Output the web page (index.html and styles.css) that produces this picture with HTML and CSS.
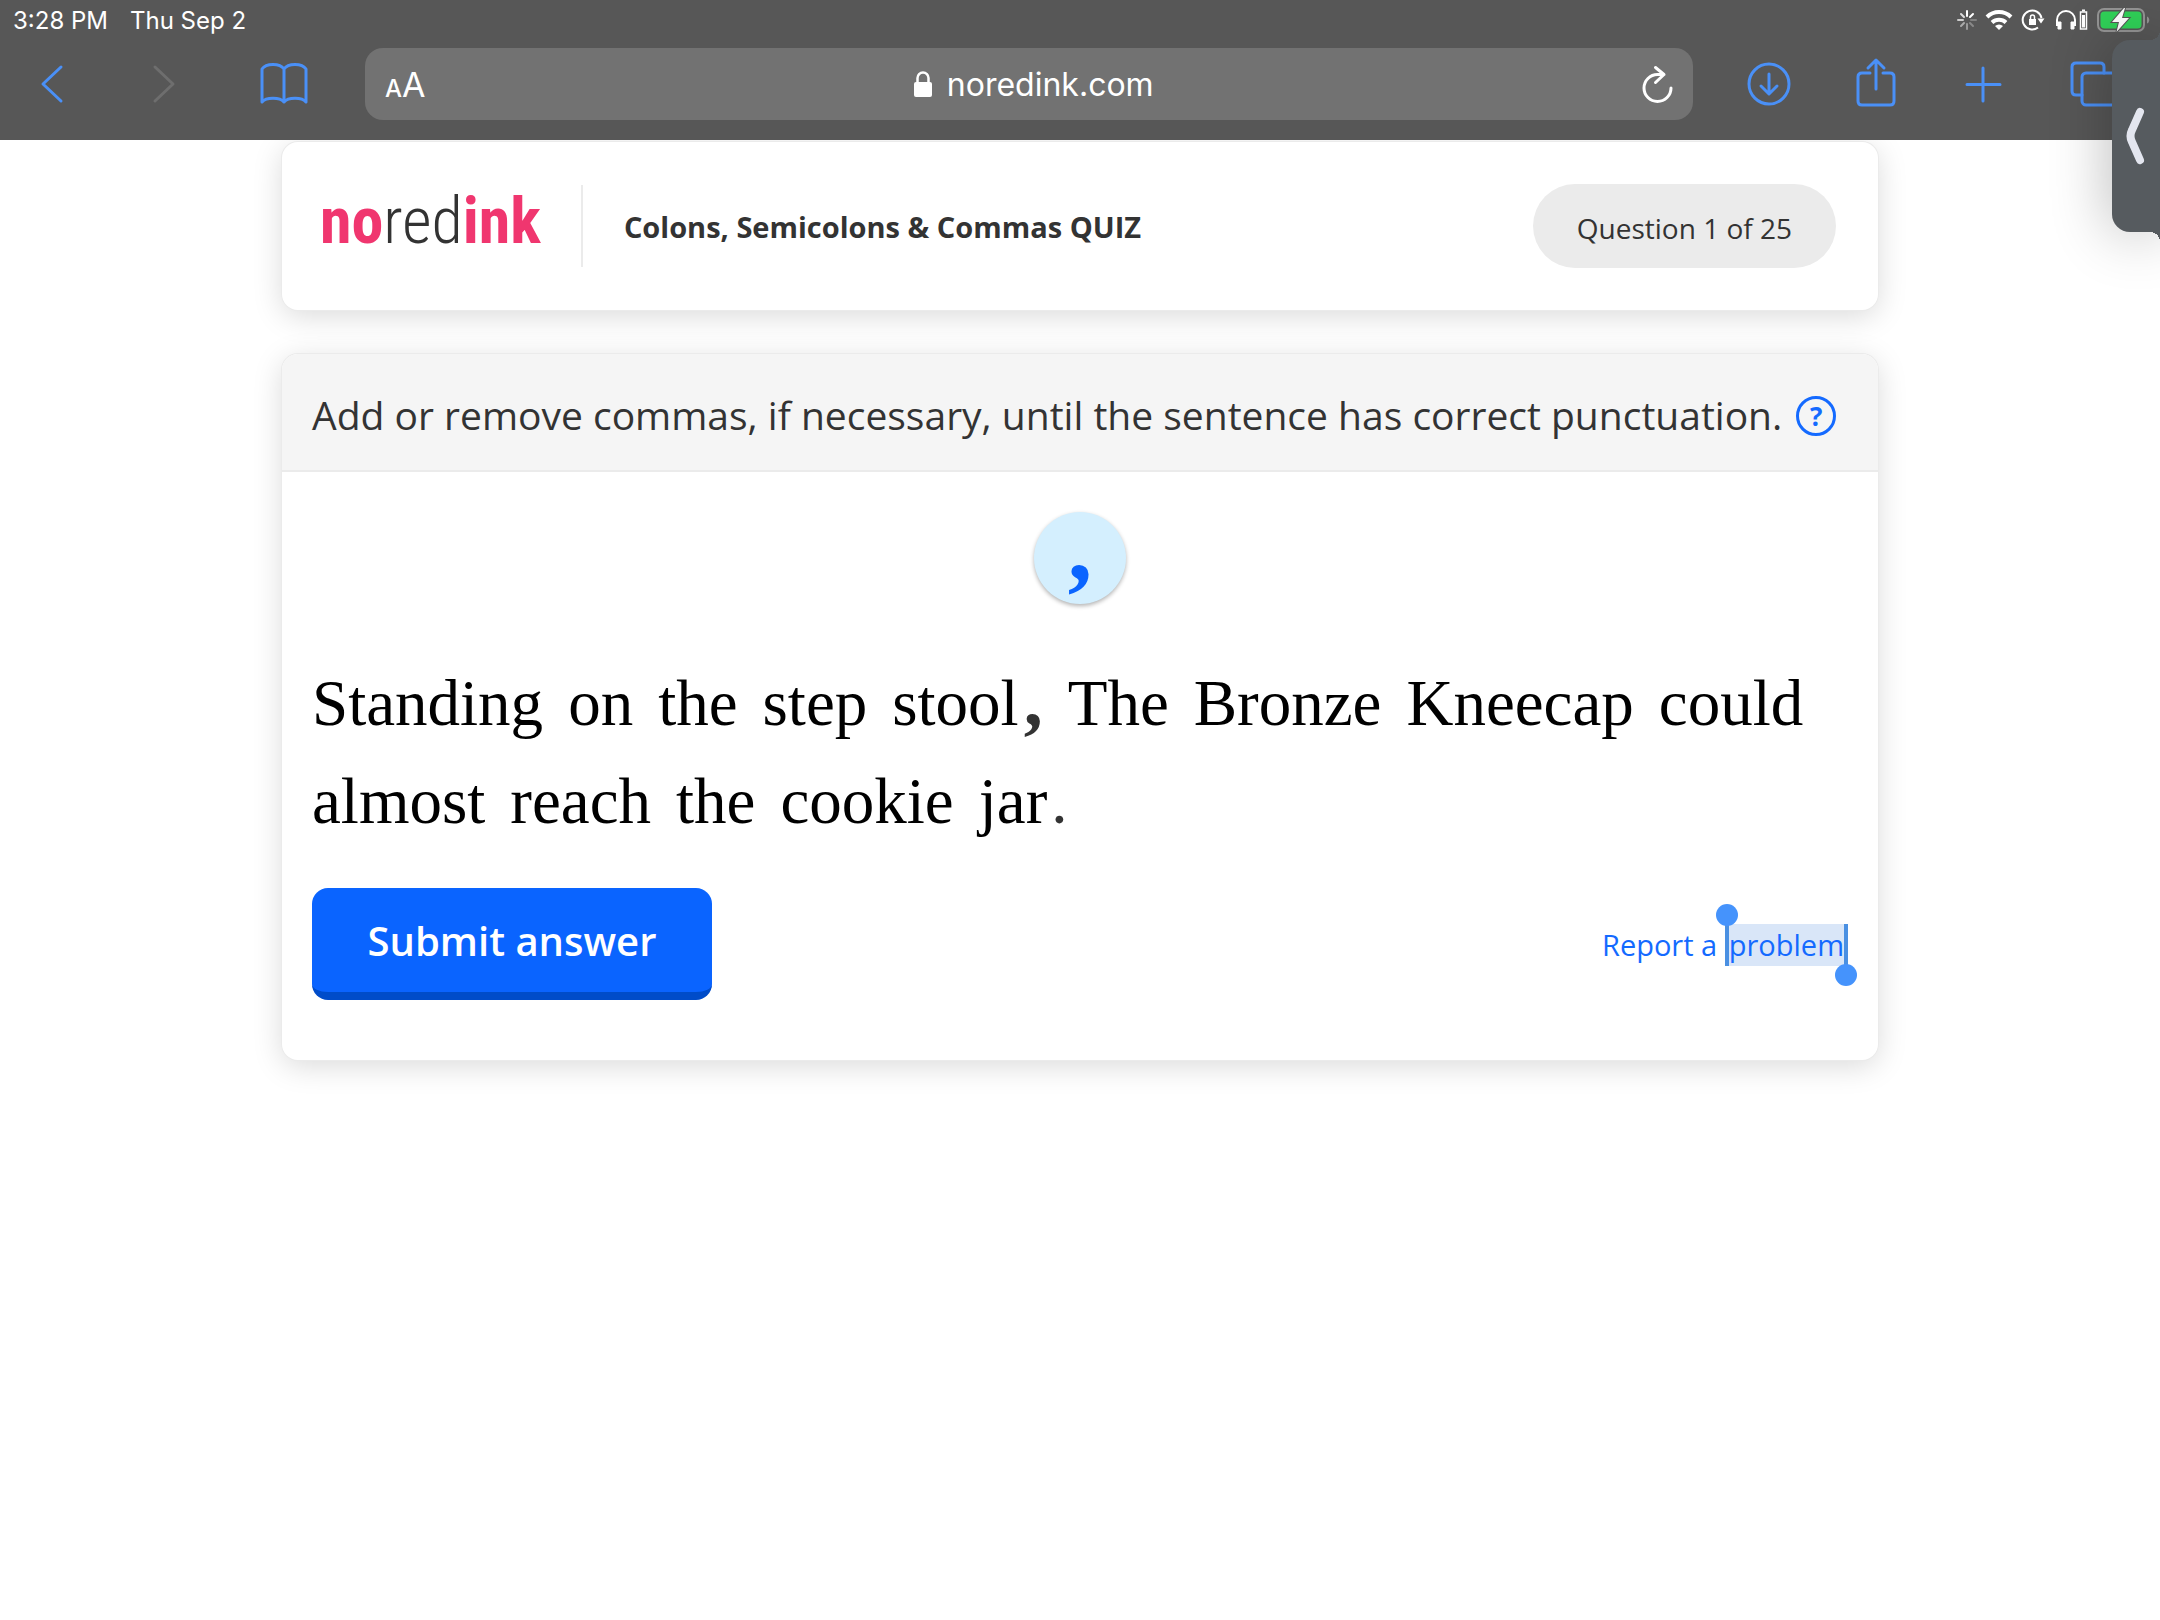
FILE: index.html
```
<!DOCTYPE html>
<html lang="en">

<head>
  <meta charset="UTF-8">
  <meta name="viewport" content="width=device-width, initial-scale=1.0">
  <title>NoRedInk</title>
  <link rel="stylesheet" href="styles.css">
</head>

<body>
  <header class="browser">
    <div class="status">
      <span>3:28 PM</span>
      <span>Thu Sep 2</span>
      <div class="status_icons">
        <svg width="20" height="24" viewBox="0 0 20 24" fill="none" stroke="#fff" stroke-width="2" stroke-linecap="round">
          <path d="M10 3v5" />
          <path d="M16 6l-3 3" />
          <path d="M19 12h-5" opacity=".25" />
          <path d="M16 18l-3-3" opacity=".3" />
          <path d="M10 21v-5" opacity=".4" />
          <path d="M4 18l3-3" opacity=".5" />
          <path d="M1 12h5" opacity=".7" />
          <path d="M4 6l3 3" opacity=".8" />
        </svg>
        <svg width="28" height="24" viewBox="0 0 28 24" fill="none" stroke="#fff" stroke-width="4">
          <path d="M2 9a17 17 0 0 1 24 0" />
          <path d="M7 14.500a10.500 10.500 0 0 1 14 0" />
          <path d="M14 22l-4-4a6 6 0 0 1 8 0z" fill="#fff" stroke="none" />
        </svg>
        <svg width="24" height="24" viewBox="0 0 24 24" fill="none" stroke="#fff" stroke-width="2">
          <path d="M17 19.500A9.500 9.500 0 1 1 20.500 10" />
          <path d="M16.500 10.500h7l-3.500 5z" fill="#fff" stroke="none" />
          <path d="M8 11h7v6H8z" fill="#fff" stroke="none" />
          <path d="M9.500 11V9a2 2 0 0 1 4 0v2" stroke-width="1.500" />
        </svg>
        <svg class="headphones" width="34" height="24" viewBox="0 0 34 24" fill="none" stroke="#fff" stroke-width="2">
          <path d="M2 18v-6a8.500 8.500 0 0 1 18 0v6" />
          <path d="M3 14h3v7H3zM16 14h3v7h-3z" fill="#fff" stroke-width="1" />
          <path d="M25.500 4h6v17h-6z" stroke-width="1.500" />
          <path d="M27 7h3v12.500h-3z" fill="#fff" stroke="none" />
          <path d="M27 2.500h3" />
        </svg>
        <svg width="54" height="26" viewBox="0 0 54 26">
          <rect x="1" y="2" width="46" height="22" rx="6" fill="none" stroke="#949494" stroke-width="2" />
          <rect x="3.500" y="4.500" width="41" height="17" rx="4" fill="#30d158" />
          <path d="M50 9.500c3 1 3 6 0 7z" fill="#949494" />
          <path d="M27 1L15 15h7l-2.500 10L32 11h-7l3-10z" fill="#fff" stroke="#575757" stroke-width="2" paint-order="stroke" />
        </svg>
      </div>
    </div>

    <div class="toolbar">
      <nav class="nav">
        <button aria-label="Back"><svg width="48" height="48" viewBox="0 0 48 48"><path d="M33 7L15 24l18 17" /></svg></button>
        <button aria-label="Forward" disabled><svg width="48" height="48" viewBox="0 0 48 48"><path d="M11 7l18 17-18 17" /></svg></button>
        <button aria-label="Bookmarks"><svg width="48" height="48" viewBox="0 0 48 48"><path d="M24 9C20 3 6 3 2 9v33c4-5 18-5 22 0 4-5 18-5 22 0V9C42 3 28 3 24 9v33" /></svg></button>
      </nav>

      <div class="address">
        <button class="text_size" aria-label="Text size"><small>A</small>A</button>
        <div class="url">
          <svg width="20" height="28" viewBox="0 0 20 28">
            <rect x="1" y="12" width="18" height="15" rx="2" fill="#fff" />
            <path d="M4.500 13V8a5.500 5.500 0 0 1 11 0v5" fill="none" stroke="#fff" stroke-width="2.500" />
          </svg>
          <span>noredink.com</span>
        </div>
        <button class="reload" aria-label="Reload"><svg width="32" height="40" viewBox="0 0 32 40"><path d="M30 24A13.500 13.500 0 1 1 16.500 10.500H23M14.500 3.500l8.500 7-8.500 8" /></svg></button>
      </div>

      <nav class="nav tools">
        <button aria-label="Downloads"><svg width="48" height="48" viewBox="0 0 48 48"><circle cx="24" cy="24" r="20" /><path d="M24 14v19M16 26l8 8 8-8" /></svg></button>
        <button aria-label="Share"><svg width="48" height="48" viewBox="0 0 48 48"><path d="M17 13H9q-4 0-4 4v24q0 4 4 4h28q4 0 4-4V17q0-4-4-4h-7M23 29V1M15 8l8-8 8 8" /></svg></button>
        <button aria-label="New tab"><svg width="48" height="48" viewBox="0 0 48 48"><path d="M22 8v33M6 24.500h33" /></svg></button>
        <button aria-label="Tabs"><svg width="48" height="48" viewBox="0 0 48 48"><path d="M13 35H7q-4 0-4-4V7q0-4 4-4h24q4 0 4 4v6" /><rect x="13" y="13" width="36" height="32" rx="4" /></svg></button>
      </nav>
    </div>

    <button class="slide_over" aria-label="Open side app">
      <svg width="20" height="60" viewBox="0 0 20 60"><path d="M16 6L8 24q-3 6 0 12l8 18" /></svg>
    </button>
  </header>

  <main class="contents_width">
    <section class="card quiz_head">
      <a class="logo" href="#"><b>no</b>red<b>ink</b></a>
      <h1>Colons, Semicolons &amp; Commas QUIZ</h1>
      <span class="count">Question 1 of 25</span>
    </section>

    <section class="card">
      <div class="direction">
        <p>Add or remove commas, if necessary, until the sentence has correct punctuation.</p>
        <button class="help" aria-label="Help">?</button>
      </div>

      <div class="question">
        <button class="comma" aria-label="Comma">,</button>

        <p class="sentence">
          <span>Standing</span>
          <span>on</span>
          <span>the</span>
          <span>step</span>
          <span>stool<b>,</b></span>
          <span>The</span>
          <span>Bronze</span>
          <span>Kneecap</span>
          <span>could</span>
          <span>almost</span>
          <span>reach</span>
          <span>the</span>
          <span>cookie</span>
          <span>jar<i>.</i></span>
        </p>

        <div class="actions">
          <button class="submit">Submit answer</button>
          <a class="report" href="#">Report a <span class="selected">problem</span></a>
        </div>
      </div>
    </section>
  </main>
</body>

</html>
```
FILE: styles.css
```
* {
  box-sizing: border-box;
}

body {
  margin: 0;
  background: #fff;
  color: #333;
  font-family: "Open Sans", sans-serif;
}

button {
  padding: 0;
  border: none;
  background: none;
  color: inherit;
  font: inherit;
  cursor: pointer;
}

svg {
  display: block;
  overflow: visible;
}

h1,
p {
  margin: 0;
}

/* browser bar */
.browser {
  position: relative;
  z-index: 1;
  background: #575757;
  color: #fff;
  font-family: Inter, sans-serif;
}

.status {
  display: flex;
  align-items: center;
  gap: 22px;
  height: 40px;
  padding: 0 9px 0 13px;
  font-size: 24px;
}

.status_icons {
  display: flex;
  align-items: center;
  gap: 8px;
  margin-left: auto;
}

.headphones {
  margin-left: 2px;
}

.toolbar {
  display: flex;
  align-items: center;
  padding: 8px 43px 20px 28px;
}

.nav {
  display: flex;
  gap: 68px;
}

.tools {
  gap: 60px;
}

.nav svg {
  fill: none;
  stroke: #4a90f7;
  stroke-width: 3;
  stroke-linecap: round;
  stroke-linejoin: round;
}

.nav button:disabled svg {
  stroke: #6e6e6e;
}

.address {
  flex: 1;
  display: flex;
  align-items: center;
  justify-content: space-between;
  height: 72px;
  margin: 0 52px 0 57px;
  padding: 0 20px;
  border-radius: 18px;
  background: #727272;
}

.text_size {
  font-size: 34px;
}

.text_size small {
  font-size: 24px;
  font-weight: 500;
}

.url {
  display: flex;
  align-items: center;
  gap: 14px;
  font-size: 32px;
}

.reload svg {
  fill: none;
  stroke: #fff;
  stroke-width: 3;
  stroke-linecap: round;
  stroke-linejoin: round;
}

.slide_over {
  position: absolute;
  top: 40px;
  right: 0;
  display: flex;
  align-items: center;
  width: 48px;
  height: 192px;
  padding-left: 12px;
  border-radius: 18px 0 0 18px;
  background: #565b5f;
  box-shadow: 0 0 60px rgba(0, 0, 0, 0.3);
}

/* flared corners at the screen edge */
.slide_over::before,
.slide_over::after {
  content: "";
  position: absolute;
  right: 0;
  width: 10px;
  height: 10px;
}

.slide_over::before {
  top: -10px;
  background: radial-gradient(circle at 0 0, transparent 10px, #565b5f 10px);
}

.slide_over::after {
  bottom: -10px;
  background: radial-gradient(circle at 0 100%, transparent 10px, #565b5f 10px);
}

.slide_over svg {
  fill: none;
  stroke: #e3e6ef;
  stroke-width: 8;
  stroke-linecap: round;
}

/* quiz */
.contents_width {
  max-width: 1596px;
  margin: 0 auto;
  padding-top: 2px;
}

.card {
  margin-bottom: 44px;
  border-radius: 16px;
  background: #fff;
  box-shadow: 0 0 0 1px #ebebeb, 0 6px 30px rgba(0, 0, 0, 0.15);
}

.quiz_head {
  display: flex;
  align-items: center;
  height: 168px;
  padding: 0 42px 0 38px;
}

.logo {
  margin-right: 40px;
  padding-bottom: 8px;
  color: #333;
  font: 300 64px/80px "Roboto Condensed", sans-serif;
  text-decoration: none;
}

.logo b {
  color: #f0366f;
  font-weight: 700;
}

.quiz_head h1 {
  padding: 2px 0 0 41px;
  border-left: 2px solid #ebebeb;
  font-size: 29px;
  font-weight: 700;
  line-height: 80px;
}

.count {
  margin-left: auto;
  padding: 4px 44px 0;
  border-radius: 42px;
  background: #ebebeb;
  font-size: 28px;
  line-height: 80px;
}

.direction {
  display: flex;
  align-items: center;
  gap: 14px;
  height: 118px;
  padding: 4px 30px 0;
  border-bottom: 2px solid #ebebeb;
  border-radius: 16px 16px 0 0;
  background: #f5f5f5;
  font-size: 39px;
}

.help {
  flex: none;
  width: 40px;
  height: 40px;
  margin-top: 4px;
  border: 3px solid #146aff;
  border-radius: 50%;
  color: #146aff;
  font-size: 26px;
  font-weight: 700;
  line-height: 34px;
}

.question {
  padding: 40px 30px 60px;
}

.comma {
  display: block;
  width: 92px;
  height: 92px;
  margin: 0 auto 50px;
  padding-bottom: 24px;
  border-radius: 50%;
  background: #d4effe;
  box-shadow: 0 2px 4px rgba(0, 0, 0, 0.3);
  color: #0a64ff;
  font: 700 98px/68px "Liberation Serif", serif;
}

.sentence {
  display: flex;
  flex-wrap: wrap;
  column-gap: 25px;
  color: #000;
  font: 65px/98px "Liberation Serif", serif;
}

.sentence b,
.sentence i {
  color: #333;
  font-style: normal;
}

.sentence b {
  margin-left: 5px;
  font-size: 76px;
  line-height: 0;
}

.sentence i {
  margin-left: 4px;
}

.actions {
  display: flex;
  align-items: center;
  justify-content: space-between;
  margin-top: 38px;
}

.submit {
  width: 400px;
  height: 112px;
  border-bottom: 8px solid #004cc9;
  border-radius: 16px;
  background: #0a64ff;
  color: #fff;
  font-size: 40px;
  font-weight: 600;
}

.report {
  padding-top: 2px;
  color: #146aff;
  font-size: 29px;
  font-weight: 500;
  line-height: 42px;
  text-decoration: none;
}

.selected {
  position: relative;
  display: inline-block;
  border: solid #4a90e2;
  border-width: 0 4px;
  background: #d9e6f8;
}

/* selection handles */
.selected::before,
.selected::after {
  content: "";
  position: absolute;
  width: 22px;
  height: 22px;
  border-radius: 50%;
  background: #4593fc;
}

.selected::before {
  top: -20px;
  left: -13px;
}

.selected::after {
  right: -13px;
  bottom: -20px;
}
```
